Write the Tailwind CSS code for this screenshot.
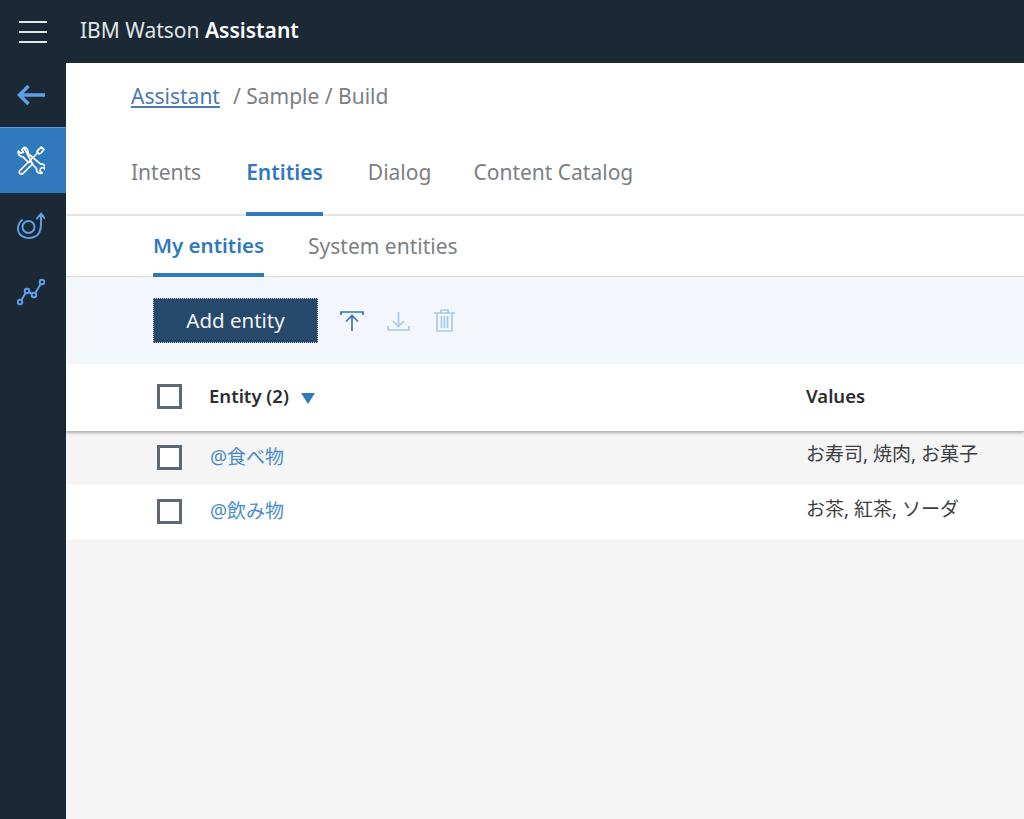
<!DOCTYPE html>
<html lang="ja">
<head>
    <meta charset="UTF-8">
    <title>IBM Watson Assistant</title>
    <script src="https://cdn.jsdelivr.net/npm/@tailwindcss/browser@4"></script>
</head>
<body class="h-screen w-screen overflow-hidden flex flex-col bg-[#f5f5f5] font-['Noto_Sans','Noto_Sans_CJK_JP',sans-serif]">
    <!-- Header -->
    <div class="h-[63px] shrink-0 bg-[#1b2836] flex items-center">
        <div class="w-[66px] flex justify-center">
            <svg class="w-[28px] h-[22px] text-[#e6e8ea]" viewBox="0 0 28 22" fill="none" stroke="currentColor" stroke-width="2">
                <path d="M0 1h28M0 11h28M0 21h28" />
            </svg>
        </div>
        <div class="ml-[14px] -mt-[1px] text-[21px] text-[#e3e6e8]">IBM Watson <span class="font-semibold text-white">Assistant</span></div>
    </div>

    <div class="flex flex-1">
        <!-- Sidebar -->
        <div class="w-[66px] shrink-0 bg-[#1b2836] flex flex-col">
            <div class="h-[64px] flex items-center justify-center pr-[4px]">
                <svg class="w-[28px] h-[22px] text-[#5ea0e6]" viewBox="0 0 28 22" fill="none" stroke="currentColor" stroke-width="3.500">
                    <path d="M28 11H2.500M11.500 2l-9 9 9 9" />
                </svg>
            </div>
            <div class="h-[66px] bg-[#3079bd] flex items-center justify-center border-t border-[#5a9be0] pr-[4px]">
                <svg class="w-[28px] h-[29px] text-white" viewBox="0 0 28 29" fill="none" stroke="currentColor" stroke-width="1.700" stroke-linejoin="round" stroke-linecap="round">
                    <!-- wrench -->
                    <path d="M7 1.500 4.800 3.800l1.700 2.500-2.800.8L1.500 5C.5 8 2.500 11 6 10.800l5.500 5.700M16 19l3.500 3.500c-.6 3.300 2.600 5.700 5.800 4.500l-2.300-2.200.7-2.600 2.700-.7 2 2.200c1-3.300-1.500-6-4.700-5.500L11 7.500C11.500 4 9.500 1.200 7 1.500Z" />
                    <!-- screwdriver -->
                    <path d="M12.500 15 3 24.500a2 2 0 0 0 3 3l9.500-9.500ZM14 13.500 21 6.500M20 6l1-2 3.500-3 2.500 2.500-3 3.500-2 1Z" />
                </svg>
            </div>
            <div class="h-[66px] flex items-center justify-center pr-[4px]">
                <svg class="w-[28px] h-[28px] text-[#5ea0e6]" viewBox="0 0 28 28" fill="none" stroke="currentColor" stroke-width="2" stroke-linecap="round" stroke-linejoin="round">
                    <circle cx="11.500" cy="15" r="6" />
                    <path d="M5 8C1 11 0 17 2 21c3 5 10 6 15 4 6-2 7-8 7-13V2M20 6.500 24 1.500 28 6.500" />
                </svg>
            </div>
            <div class="h-[66px] flex items-center justify-center pr-[4px]">
                <svg class="w-[28px] h-[28px] text-[#5ea0e6]" viewBox="0 0 28 28" fill="none" stroke="currentColor" stroke-width="2">
                    <circle cx="3" cy="24" r="2.300" /><circle cx="10" cy="13" r="2.300" /><circle cx="17" cy="17" r="2.300" /><circle cx="25" cy="4" r="2.300" />
                    <path d="m4.200 22.300 4.600-7.600M11.800 13.900l3.400 2.200M18.200 15.300l5.600-9.600" />
                </svg>
            </div>
        </div>

        <!-- Main -->
        <div class="flex-1 flex flex-col">
            <div class="bg-white h-[153px] border-b-2 border-[#e2e4e6] flex flex-col pl-[65px]">
                <div class="h-[67px] flex items-center text-[21px] text-[#7b7f83]">
                    <a class="text-[#4a78b8] underline underline-offset-2">Assistant</a>
                    <span class="ml-[13px]">/ Sample / Build</span>
                </div>
                <div class="flex flex-1 gap-[44px] text-[21px] text-[#7b7f83]">
                    <div class="flex items-center pt-[2px]">Intents</div>
                    <div class="flex items-center ml-px pt-[4px] font-semibold text-[#3079bd] border-b-[4px] border-[#3079bd] -mb-[2px]">Entities</div>
                    <div class="flex items-center ml-px pt-[2px]">Dialog</div>
                    <div class="flex items-center -ml-[2px] pt-[2px]">Content Catalog</div>
                </div>
            </div>
            <div class="bg-white h-[61px] border-b border-[#d8dadc] flex gap-[44px] pl-[87px] text-[21px] text-[#7b7f83]">
                <div class="flex items-center pt-[1px] text-[20.500px] font-semibold text-[#3079bd] border-b-[4px] border-[#3079bd] -mb-px">My entities</div>
                <div class="flex items-center pt-[1px]">System entities</div>
            </div>

            <!-- Toolbar -->
            <div class="bg-[#f3f6fb] h-[87px] flex items-center pl-[87px]">
                <button class="w-[165px] h-[45px] bg-[#26496b] text-[#f0f3f6] text-[20.500px] border border-dotted border-[#c0c4c8]">Add entity</button>
                <svg class="ml-[22px] w-[24px] h-[22px] text-[#3079bd]" viewBox="0 0 24 22" fill="none" stroke="currentColor" stroke-width="1.700">
                    <path d="M1 5V2h22v3M12 21V6M6 11.500l6-6 6 6" />
                </svg>
                <svg class="ml-[23px] w-[23px] h-[22px] text-[#a9cbe8]" viewBox="0 0 23 22" fill="none" stroke="currentColor" stroke-width="1.700">
                    <path d="M1 16v4h21v-4M11.500 2v14M6 11l5.500 5.500L17 11" />
                </svg>
                <svg class="ml-[24px] w-[21px] h-[23px] text-[#a9cbe8]" viewBox="0 0 21 23" fill="none" stroke="currentColor" stroke-width="1.700">
                    <path d="M0 4h21M7 4V1h7v3M3 4v18h15V4M7.500 7v12M10.500 7v12M13.500 7v12" />
                </svg>
            </div>

            <!-- Table -->
            <div class="bg-white h-[67px] flex items-center shadow-[0_2px_3px_rgba(0,0,0,0.3)] relative z-10 text-[18.500px] font-semibold text-[#2b2e31]">
                <div class="ml-[91px] -mt-[2px] w-[25px] h-[25px] border-[3px] border-[#5c6873]"></div>
                <div class="ml-[27px] -mt-[3px]">Entity (2)</div>
                <div class="ml-[12px] mt-[2px] w-0 h-0 border-x-[7px] border-x-transparent border-t-[11px] border-t-[#3079bd]"></div>
                <div class="absolute left-[740px] top-[18px]">Values</div>
            </div>
            <div class="bg-[#f5f5f5] h-[54px] flex items-center relative text-[19px]">
                <div class="ml-[91px] -mt-[2px] w-[25px] h-[25px] bg-white border-[3px] border-[#5c6873]"></div>
                <div class="ml-[28px] -mt-[2px] text-[#4a8cc9]">@食べ物</div>
                <div class="absolute left-[740px] top-[9px] text-[#3c3f42]">お寿司, 焼肉, お菓子</div>
            </div>
            <div class="bg-white h-[54px] flex items-center relative text-[19px]">
                <div class="ml-[91px] -mt-[1px] w-[25px] h-[25px] bg-white border-[3px] border-[#5c6873]"></div>
                <div class="ml-[28px] -mt-[1px] text-[#4a8cc9]">@飲み物</div>
                <div class="absolute left-[740px] top-[10px] text-[#3c3f42]">お茶, 紅茶, ソーダ</div>
            </div>
        </div>
    </div>
</body>
</html>
